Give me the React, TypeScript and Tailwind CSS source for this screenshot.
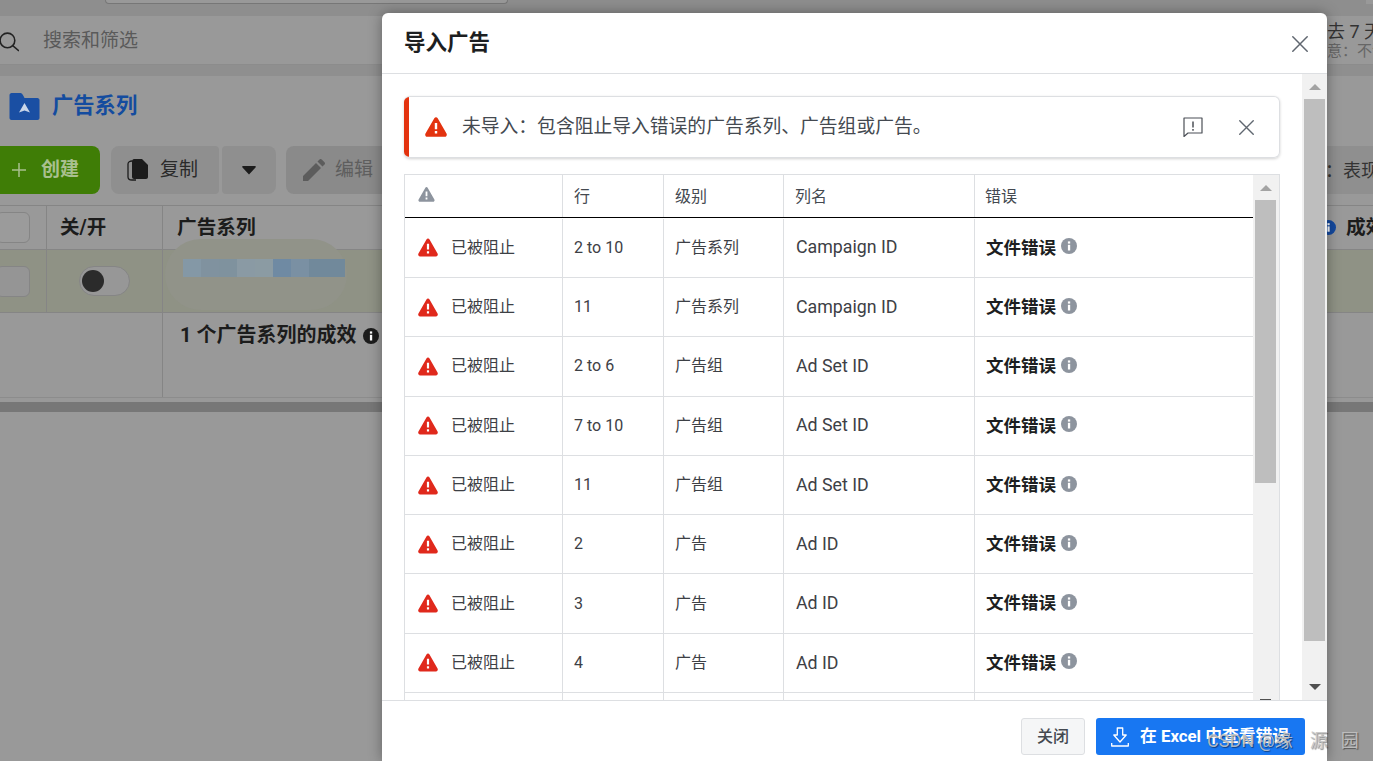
import React from "react";

const Warn = ({ className = "", color = "#e0291c" }: { className?: string; color?: string }) => (
  <svg viewBox="0 0 22 20" className={className} fill={color}>
    <path
      fillRule="evenodd"
      d="M9.3 1.2c.8-1.4 2.6-1.4 3.4 0l8.8 15.4c.8 1.4-.1 3.2-1.7 3.2H2.2C.6 19.8-.3 18 .5 16.6L9.300 1.200ZM9.800 6v6.300h2.400V6H9.800Zm0 8v2.500h2.400V14H9.800Z"
    />
  </svg>
);

const Info = ({ className = "", color = "#8d949e" }: { className?: string; color?: string }) => (
  <svg viewBox="0 0 16 16" className={className}>
    <circle cx="8" cy="8" r="8" fill={color} />
    <rect x="6.900" y="6.800" width="2.300" height="5.700" fill="#fff" />
    <rect x="6.900" y="3.400" width="2.300" height="2.200" fill="#fff" />
  </svg>
);

const Cross = ({ className = "" }: { className?: string }) => (
  <svg viewBox="0 0 16 16" className={className} fill="none" stroke="#606770" strokeWidth="1.500" strokeLinecap="round">
    <path d="M.8.8l14.400 14.400M15.200.8.8 15.200" />
  </svg>
);

const rows = [
  ["2 to 10", "广告系列", "Campaign ID"],
  ["11", "广告系列", "Campaign ID"],
  ["2 to 6", "广告组", "Ad Set ID"],
  ["7 to 10", "广告组", "Ad Set ID"],
  ["11", "广告组", "Ad Set ID"],
  ["2", "广告", "Ad ID"],
  ["3", "广告", "Ad ID"],
  ["4", "广告", "Ad ID"],
];

const mosaic = ["#8498a6", "#80929f", "#7f929e", "#8a9aa4", "#8b9ba3", "#6f8aa3", "#7a90a3", "#71899b", "#71899b"];

const Background = () => (
  <div className="flex h-[761px] flex-col bg-[#999999]">
    <div className="flex h-4 shrink-0 justify-between bg-[#8e8e8e]">
      <div className="ml-[105px] h-[4px] w-[403px] rounded-b-md border-x border-b border-[#777777] bg-[#999999]" />
      <div className="h-[4px] w-[7px] bg-[#999999]" />
    </div>
    <div className="flex h-[49px] shrink-0 items-center justify-between overflow-hidden border-b border-[#8c8c8c] bg-[#999999]">
      <div className="flex items-center pt-[3px]">
        <svg viewBox="0 0 20 20" className="-ml-[2px] h-[21px] w-[21px]" fill="none" stroke="#222" strokeWidth="1.500">
          <circle cx="9" cy="9" r="7" />
          <path d="M14 14l6 5" />
        </svg>
        <span className="ml-[24px] text-[19px] text-[#5a5a5a]">搜索和筛选</span>
      </div>
      <div className="flex w-[46px] flex-col overflow-hidden whitespace-nowrap pt-[1px]">
        <span className="text-[18px] leading-[22px] text-[#333]">去 7 天</span>
        <span className="text-[15px] leading-[17px] text-[#666]">意：不包</span>
      </div>
    </div>
    <div className="h-[11px] shrink-0 bg-[#8f8f8f]" />
    <div className="flex h-[70px] shrink-0 items-center pb-[10px]">
      <svg viewBox="0 0 30 27" className="ml-[9px] h-[27px] w-[31px]">
        <path d="M2 0h9c1 0 2 1 3 3l1 2h13c1 0 2 1 2 2v18c0 1-1 2-2 2H2c-1 0-2-1-2-2V2C0 1 1 0 2 0Z" fill="#1a4fa3" />
        <path d="M15 10l5.500 9.500-5.500-2-5.500 2Z" fill="#c9d6e8" />
      </svg>
      <span className="ml-[12px] text-[21.300px] font-bold text-[#144c9f]">广告系列</span>
    </div>
    <div className="flex h-[48px] shrink-0 items-stretch overflow-hidden">
      <div className="flex w-[100px] items-center rounded-r-lg bg-[#3f7d06] pl-[12px]">
        <svg viewBox="0 0 14 14" className="h-[14px] w-[14px]" stroke="#a9c08f" strokeWidth="1.500">
          <path d="M7 0v14M0 7h14" />
        </svg>
        <span className="ml-[15px] text-[19px] font-bold text-[#a9c08f]">创建</span>
      </div>
      <div className="ml-[11px] flex w-[108px] items-center rounded-l-lg rounded-r-sm bg-[#8f8f8f] pl-[16px]">
        <svg viewBox="0 0 23 22" className="h-[22px] w-[23px]">
          <path d="M5 2C3 2 1 3 1 5v13c0 2 2 3 4 3h4" fill="none" stroke="#1c1c1c" strokeWidth="1.300" />
          <path d="M7 0h8l6 6v12c0 1-1 2-2 2H7c-1 0-2-1-2-2V2c0-1 1-2 2-2Z" fill="#1c1c1c" />
        </svg>
        <span className="ml-[10px] text-[19px] text-[#2a2a2a]">复制</span>
      </div>
      <div className="ml-[3px] flex w-[54px] items-center justify-center rounded-l-sm rounded-r-lg bg-[#8f8f8f]">
        <svg viewBox="0 0 14 9" className="h-[9px] w-[14px]">
          <path d="M1 0h12c1 0 1 1 .5 1.500L7 8.500.5 1.500C0 1 0 0 1 0Z" fill="#1c1c1c" />
        </svg>
      </div>
      <div className="ml-[10px] flex w-[120px] items-center rounded-lg bg-[#8a8a8a] pl-[17px]">
        <svg viewBox="0 0 22 22" className="h-[22px] w-[22px]">
          <path d="M0 22v-5L13 4l5 5L5 22ZM14.500 2.500 16.500.5c.7-.7 1.500-.7 2.200 0l2.800 2.800c.7.7.7 1.500 0 2.200l-2 2Z" fill="#5c5c5c" />
        </svg>
        <span className="ml-[10px] text-[19px] text-[#5e5e5e]">编辑</span>
      </div>
      <div className="ml-auto flex w-[46px] items-center overflow-hidden whitespace-nowrap bg-[#8f8f8f]">
        <span className="-ml-[2px] text-[18px] text-[#333]">：表现</span>
      </div>
    </div>
    <div className="h-[11px] shrink-0" />
    <div className="flex h-[45px] shrink-0 border-y border-[#858585]">
      <div className="flex w-[47px] shrink-0 items-center border-r border-[#858585]">
        <div className="-ml-[4px] h-[31px] w-[34px] rounded-md border border-[#858585] bg-[#9b9b9b]" />
      </div>
      <div className="flex w-[116px] shrink-0 items-center border-r border-[#858585] pl-[13px] text-[19.500px] font-bold text-[#1c1c1c]">关/开</div>
      <div className="flex items-center pl-[14px] text-[19.700px] font-bold text-[#1c1c1c]">广告系列</div>
      <div className="ml-auto flex w-[51px] items-center overflow-hidden whitespace-nowrap">
        <Info className="-ml-[1px] h-[15px] w-[15px] shrink-0" color="#14499e" />
        <span className="ml-[10px] text-[19.700px] font-bold text-[#1c1c1c]">成效</span>
      </div>
    </div>
    <div className="flex h-[63px] shrink-0 border-b border-[#858585] bg-[#8f9285]">
      <div className="flex w-[47px] shrink-0 items-center border-r border-[#858585]">
        <div className="-ml-[4px] h-[31px] w-[34px] rounded-md border border-[#858585] bg-[#959595]" />
      </div>
      <div className="flex w-[116px] shrink-0 items-center justify-center border-r border-[#858585] pb-[1px]">
        <div className="flex h-[30px] w-[51px] items-center rounded-full border border-[#858585] bg-[#979797] pl-[2px]">
          <div className="h-[22px] w-[22px] rounded-full bg-[#2b2b2b]" />
        </div>
      </div>
      <div className="relative flex-1">
        <div className="absolute -top-[11px] left-[2px] h-[71px] w-[182px] rounded-[40px] bg-[#919389]" />
        <div className="relative ml-[20px] mt-[9px] flex h-[18px]">
          {mosaic.map((c, i) => (
            <div key={i} className="h-[18px] w-[18px]" style={{ background: c }} />
          ))}
        </div>
      </div>
    </div>
    <div className="flex h-[85px] shrink-0 border-b border-[#8c8c8c]">
      <div className="w-[163px] shrink-0 border-r border-[#858585]" />
      <div className="flex items-start whitespace-nowrap pl-[17px] pt-[9px]">
        <span className="text-[20px] font-bold leading-[26px] text-[#1c1c1c]">1 个广告系列的成效</span>
        <Info className="ml-[7px] mt-[6px] h-[16px] w-[16px]" color="#1c1c1c" />
      </div>
    </div>
    <div className="mt-[4px] h-[10px] shrink-0 bg-[#777777]" />
  </div>
);

export default function App() {
  return (
    <div className="relative h-[761px] w-[1373px] overflow-hidden font-['Roboto','Noto_Sans_CJK_SC',sans-serif]">
      <Background />
      <div className="absolute left-[382px] top-[13px] flex h-[748px] w-[945px] flex-col overflow-hidden rounded-t-md bg-white shadow-[0_0_14px_rgba(0,0,0,0.35)]">
        <div className="flex h-[61px] shrink-0 items-center justify-between border-b border-[#dddfe2] pl-[22px] pr-[19px]">
          <h1 className="text-[21.500px] font-bold text-[#1c1e21]">导入广告</h1>
          <button className="mt-[2px]">
            <Cross className="block h-[16px] w-[16px]" />
          </button>
        </div>
        <div className="flex h-[626px] shrink-0">
          <div className="flex w-[920px] shrink-0 flex-col overflow-hidden px-[22px]">
            <div className="mt-[22px] flex h-[62px] shrink-0 items-center overflow-hidden rounded-md border border-[#dddfe2] border-l-0 shadow-[0_1px_3px_rgba(0,0,0,0.18)]">
              <div className="h-full w-[5px] bg-[#e3330f]" />
              <Warn className="ml-[16px] h-[20px] w-[22px]" color="#e3330f" />
              <span className="ml-[15px] pt-[1px] text-[18.800px] text-[#444950]">未导入：包含阻止导入错误的广告系列、广告组或广告。</span>
              <svg viewBox="0 0 20 20" className="ml-auto h-[20px] w-[20px]" fill="none" stroke="#4b4f56" strokeWidth="1.200">
                <path d="M1 1h18v15H5l-4 3.500Z" strokeLinejoin="round" />
                <path d="M10 4.500v6M10 12v1.800" strokeWidth="1.500" />
              </svg>
              <Cross className="ml-[36px] mr-[25px] h-[15px] w-[15px]" />
            </div>
            <div className="mt-[16px] flex min-h-0 flex-1 border-x border-t border-[#dddfe2]">
              <div className="w-[848px] shrink-0 overflow-hidden">
                <div className="grid h-[43px] grid-cols-[158px_101px_120px_191px_279px] border-b border-black text-[16px] text-[#444950]">
                  <div className="flex items-center border-r border-[#dddfe2] pb-[3px] pl-[13px]">
                    <Warn className="h-[15px] w-[17px]" color="#8d949e" />
                  </div>
                  <div className="flex items-center border-r border-[#dddfe2] pl-[11px] pt-[2px]">行</div>
                  <div className="flex items-center border-r border-[#dddfe2] pl-[11px] pt-[2px]">级别</div>
                  <div className="flex items-center border-r border-[#dddfe2] pl-[11px] pt-[2px]">列名</div>
                  <div className="flex items-center pl-[10px] pt-[2px]">错误</div>
                </div>
                <div className="pt-[0.700px]">
                  {rows.map((r, i) => (
                    <div key={i} className="grid h-[59.300px] grid-cols-[158px_101px_120px_191px_279px] border-b border-[#dddfe2] text-[16px] text-[#3d4045]">
                      <div className="flex items-center border-r border-[#dddfe2] pl-[13px]">
                        <Warn className="h-[19px] w-[20px]" />
                        <span className="ml-[13px]">已被阻止</span>
                      </div>
                      <div className="flex items-center border-r border-[#dddfe2] pl-[11px]">{r[0]}</div>
                      <div className="flex items-center border-r border-[#dddfe2] pl-[11px]">{r[1]}</div>
                      <div className="flex items-center border-r border-[#dddfe2] pl-[12px] text-[17.800px]">{r[2]}</div>
                      <div className="flex items-center pl-[11px]">
                        <span className="text-[17.500px] font-bold text-[#1c1e21]">文件错误</span>
                        <Info className="mb-[3px] ml-[4.500px] h-[16px] w-[16px]" />
                      </div>
                    </div>
                  ))}
                </div>
                <div className="grid h-[20px] grid-cols-[158px_101px_120px_191px_279px]">
                  <div className="border-r border-[#dddfe2]" />
                  <div className="border-r border-[#dddfe2]" />
                  <div className="border-r border-[#dddfe2]" />
                  <div className="border-r border-[#dddfe2]" />
                  <div />
                </div>
              </div>
              <div className="flex w-[26px] shrink-0 flex-col overflow-hidden bg-[#f1f1f1] pl-[2px] pr-[3px]">
                <div className="flex h-[25px] shrink-0 items-center justify-center">
                  <div className="h-0 w-0 border-x-[6px] border-b-[6px] border-x-transparent border-b-[#a3a3a3]" />
                </div>
                <div className="h-[283px] w-[21px] shrink-0 bg-[#bebebe]" />
                <div className="h-[216px] shrink-0" />
                <div className="h-[2px] w-[11px] shrink-0 self-center bg-[#505050]" />
              </div>
            </div>
          </div>
          <div className="flex w-[25px] shrink-0 flex-col items-center bg-[#f1f1f1]">
            <div className="flex h-[25px] w-full shrink-0 items-center justify-center">
              <div className="h-0 w-0 border-x-[6px] border-b-[6px] border-x-transparent border-b-[#a3a3a3]" />
            </div>
            <div className="h-[542px] w-[21px] shrink-0 bg-[#bebebe]" />
            <div className="mt-auto flex h-[25px] shrink-0 items-center justify-center pb-[1px]">
              <div className="h-0 w-0 border-x-[6px] border-t-[6px] border-x-transparent border-t-[#505050]" />
            </div>
          </div>
        </div>
        <div className="flex min-h-0 flex-1 items-start justify-end gap-[11px] border-t border-[#dddfe2] pr-[22px] pt-[17px]">
          <button className="h-[37px] w-[64px] rounded-[3px] border border-[#dddfe2] bg-[#f5f6f7] text-[16px] font-medium text-[#444950]">关闭</button>
          <button className="flex h-[37px] w-[209px] items-center rounded-[3px] bg-[#1877f2] pl-[15px] text-[16.800px] font-bold text-white">
            <svg viewBox="0 0 18 20" className="h-[20px] w-[18px]" fill="none" stroke="#fff" strokeWidth="1.300" strokeLinejoin="round">
              <path d="M6.300 1h5.400v7h3.500L9 15 2.800 8h3.500Z" />
              <path d="M.7 16v3h16.600v-3" />
            </svg>
            <span className="ml-[11px] whitespace-nowrap pt-[1px]">在 Excel 中查看错误</span>
          </button>
        </div>
      </div>
      <div className="pointer-events-none absolute left-[1207px] top-[729px] flex whitespace-nowrap text-[18px] leading-[24px] text-[#c4c4c4]/90 [text-shadow:1px_1px_1px_rgba(0,0,0,0.45)]">
        <span>CSDN @缘</span>
        <span className="ml-[17px]">源</span>
        <span className="ml-[13px]">园</span>
      </div>
    </div>
  );
}
